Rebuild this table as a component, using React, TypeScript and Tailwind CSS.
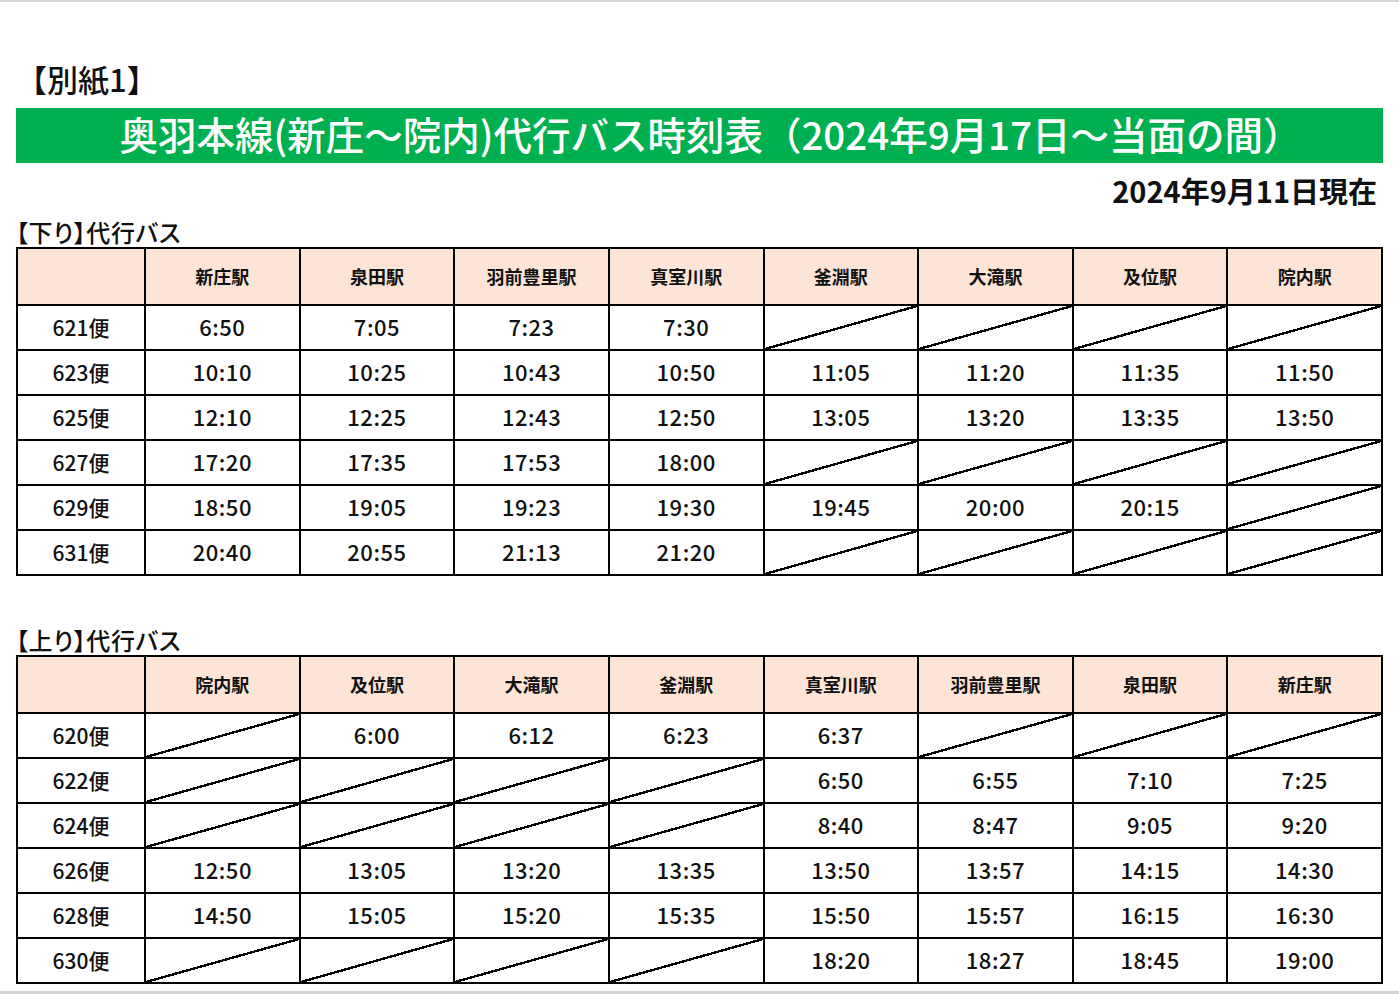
const down = {
  stations: ["新庄駅", "泉田駅", "羽前豊里駅", "真室川駅", "釜淵駅", "大滝駅", "及位駅", "院内駅"],
  rows: [
    ["621便", "6:50", "7:05", "7:23", "7:30", "", "", "", ""],
    ["623便", "10:10", "10:25", "10:43", "10:50", "11:05", "11:20", "11:35", "11:50"],
    ["625便", "12:10", "12:25", "12:43", "12:50", "13:05", "13:20", "13:35", "13:50"],
    ["627便", "17:20", "17:35", "17:53", "18:00", "", "", "", ""],
    ["629便", "18:50", "19:05", "19:23", "19:30", "19:45", "20:00", "20:15", ""],
    ["631便", "20:40", "20:55", "21:13", "21:20", "", "", "", ""],
  ],
};

const up = {
  stations: ["院内駅", "及位駅", "大滝駅", "釜淵駅", "真室川駅", "羽前豊里駅", "泉田駅", "新庄駅"],
  rows: [
    ["620便", "", "6:00", "6:12", "6:23", "6:37", "", "", ""],
    ["622便", "", "", "", "", "6:50", "6:55", "7:10", "7:25"],
    ["624便", "", "", "", "", "8:40", "8:47", "9:05", "9:20"],
    ["626便", "12:50", "13:05", "13:20", "13:35", "13:50", "13:57", "14:15", "14:30"],
    ["628便", "14:50", "15:05", "15:20", "15:35", "15:50", "15:57", "16:15", "16:30"],
    ["630便", "", "", "", "", "18:20", "18:27", "18:45", "19:00"],
  ],
};

// 空欄は左下→右上の斜線
const slash =
  "bg-[linear-gradient(to_bottom_right,transparent_calc(50%-1.2px),#000_calc(50%-1.2px),#000_calc(50%+1.2px),transparent_calc(50%+1.2px))]";

function Timetable({ data }: { data: typeof down }) {
  return (
    <table className="w-full table-fixed border-collapse border-2 border-black">
      <colgroup>
        <col className="w-[128px]" />
        {data.stations.map((s) => (
          <col key={s} />
        ))}
      </colgroup>
      <thead>
        <tr className="h-[57px] bg-[#fce4d6]">
          <th className="border-2 border-black"></th>
          {data.stations.map((s) => (
            <th key={s} className="border-2 border-black text-[18px] font-bold text-[#111]">
              {s}
            </th>
          ))}
        </tr>
      </thead>
      <tbody>
        {data.rows.map((r) => (
          <tr key={r[0]} className="h-[45px]">
            <td className="border-2 border-black p-0 pt-[1px] text-center text-[21px] font-medium text-[#111]">
              {r[0]}
            </td>
            {r.slice(1).map((v, i) => (
              <td
                key={i}
                className={`border-2 border-black p-0 pb-[3px] text-center text-[22px] font-medium tracking-[0.5px] text-[#111] ${
                  v === "" ? slash : ""
                }`}
              >
                {v}
              </td>
            ))}
          </tr>
        ))}
      </tbody>
    </table>
  );
}

export default function App() {
  return (
    <div className="flex h-[994px] flex-col border-t-2 border-[#d4d4d4] bg-white font-['Noto_Sans_CJK_JP','Noto_Sans',sans-serif] text-[#111]">
      <div className="flex-1 px-4">
        <h1 className="mt-[55px] text-[31px] leading-[44px] font-medium">【別紙1】</h1>
        <div className="mt-[7px] flex h-[55px] items-center justify-center bg-[#00b050] pb-[3px] pl-[22px] text-[38.5px] font-medium text-white">
          奥羽本線(新庄～院内)代行バス時刻表（2024年9月17日～当面の間）
        </div>
        <p className="mt-[9px] pr-[6px] text-right text-[29px] leading-[36px] font-semibold">2024年9月11日現在</p>
        <h2 className="mt-[9px] text-[24px] leading-[30px] font-medium tracking-[0.6px] [font-feature-settings:'palt']">
          【下り】代行バス
        </h2>
        <Timetable data={down} />
        <h2 className="mt-[49px] text-[24px] leading-[30px] font-medium tracking-[0.6px] [font-feature-settings:'palt']">
          【上り】代行バス
        </h2>
        <Timetable data={up} />
      </div>
      <div className="h-[3px] bg-[#d4d4d4]"></div>
    </div>
  );
}
